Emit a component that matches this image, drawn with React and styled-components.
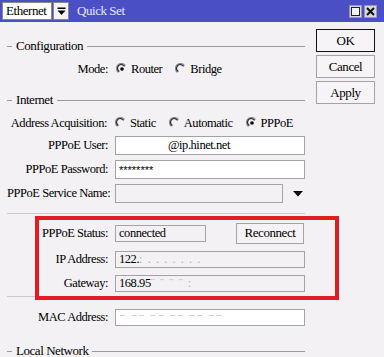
import React from 'react'
import styled, { createGlobalStyle } from 'styled-components'

const GlobalStyle = createGlobalStyle`
  html, body {
    margin: 0;
    padding: 0;
    background: #f3f1f4;
  }
`

const Window = styled.div`
  width: 384px;
  height: 357px;
  overflow: hidden;
  background: #f3f1f4;
  display: flex;
  flex-direction: column;
  font-family: "Liberation Serif", "DejaVu Serif", serif;
  font-size: 12.5px;
  letter-spacing: -0.45px;
  color: #000;
`

const TitleBar = styled.div`
  height: 22px;
  flex: none;
  background: #4b4fc6;
  display: flex;
  align-items: center;
  padding: 0 7px 0 2px;
  box-sizing: border-box;
`

const InterfaceSelect = styled.div`
  width: 50px;
  height: 18px;
  box-sizing: border-box;
  background: #fff;
  border: 1px solid #8a8a8a;
  padding-left: 3px;
  line-height: 16px;
  font-size: 13px;
`

const SelectArrow = styled.div`
  width: 16px;
  height: 18px;
  margin-left: 1px;
  box-sizing: border-box;
  background: #f4f4f4;
  border: 1px solid #8a8a8a;
  display: flex;
  align-items: center;
  justify-content: center;
`

const Title = styled.div`
  margin-left: 8px;
  color: #e4e6ff;
  font-size: 13px;
  flex: 1;
`

const TitleButton = styled.div`
  width: 13px;
  height: 13px;
  margin-left: 2px;
  box-sizing: border-box;
  background: #d8d6dc;
  border: 1px solid #9a98a0;
  display: flex;
  align-items: center;
  justify-content: center;
`

const Body = styled.div`
  display: flex;
  flex: 1;
`

const Form = styled.div`
  width: 305px;
  padding: 16px 0 0 7px;
  box-sizing: border-box;
  display: flex;
  flex-direction: column;
`

const GroupHeader = styled.div`
  height: 16px;
  display: flex;
  align-items: center;
  margin-top: ${p => p.$top || 0}px;
  font-size: 13px;

  &::before {
    content: '';
    width: 5px;
    height: 1px;
    background: #9c9aa0;
    margin-right: 4px;
  }
  &::after {
    content: '';
    flex: 1;
    height: 1px;
    background: #9c9aa0;
    margin-left: 4px;
  }
`

const Row = styled.div`
  display: flex;
  align-items: center;
  height: ${p => p.$h || 19}px;
  margin-top: ${p => p.$top || 0}px;
`

const Label = styled.div`
  width: 101px;
  margin-right: 7px;
  text-align: right;
  white-space: nowrap;
`

const Field = styled.div`
  width: ${p => p.$w || 190}px;
  height: ${p => p.$h || 19}px;
  box-sizing: border-box;
  border: 1px solid #a4a2a8;
  background: ${p => (p.$disabled ? '#f3f1f4' : '#fff')};
  padding-left: ${p => p.$indent || 3}px;
  display: flex;
  align-items: center;
  white-space: nowrap;
  overflow: hidden;
`

const Hidden = styled.span`
  color: #b4b2b8;
  letter-spacing: 1px;
`

const Stars = styled.span`
  font-family: "Liberation Sans", Arial, sans-serif;
  font-size: 11px;
  letter-spacing: 0;
`

const RadioItem = styled.div`
  display: flex;
  align-items: center;
  margin-right: 12px;

  svg {
    margin: 0 3px 0 1px;
  }
`

const ComboArrow = styled.div`
  margin-left: 10px;
  display: flex;
`

const Separator = styled.div`
  height: 1px;
  background: #cac8ce;
  margin-top: ${p => p.$top || 0}px;
`

const StatusBlock = styled.div`
  position: relative;
  padding: 8px 0 4px;
`

const Highlight = styled.div`
  position: absolute;
  left: 28px;
  top: 2px;
  width: 304px;
  height: 84px;
  box-sizing: border-box;
  border: 4px solid #e21c22;
  pointer-events: none;
`

const SmallButton = styled.div`
  width: 68px;
  height: 21px;
  margin-left: 30px;
  box-sizing: border-box;
  border: 1px solid #a4a2a8;
  background: #f5f3f6;
  display: flex;
  align-items: center;
  justify-content: center;
  font-size: 13px;
`

const ButtonColumn = styled.div`
  margin-left: 11px;
  padding-top: 7px;
  display: flex;
  flex-direction: column;
  gap: 3px;
`

const DialogButton = styled.div`
  width: 59px;
  height: 23px;
  box-sizing: border-box;
  border: 1px solid ${p => (p.$primary ? '#111' : '#a4a2a8')};
  background: #f6f4f7;
  display: flex;
  align-items: center;
  justify-content: center;
  font-size: 13px;
`

const Radio = ({ checked, children }) => (
  <RadioItem>
    <svg width="12" height="12" viewBox="0 0 12 12">
      <path d="M9.5 2.5 A5 5 0 1 0 2.5 9.5" fill="none" stroke="#8a888e" strokeWidth="1.2" />
      <path d="M8.6 3.4 A3.8 3.8 0 1 0 3.4 8.6" fill="none" stroke="#2a2a2a" strokeWidth="1.2" />
      {checked && <circle cx="6" cy="6" r="1.8" fill="#000" />}
    </svg>
    {children}
  </RadioItem>
)

const DownTriangle = () => (
  <svg width="10" height="6" viewBox="0 0 10 6">
    <path d="M0 0 H10 L5 5.5 Z" fill="#000" />
  </svg>
)

export default function App() {
  return (
    <>
      <GlobalStyle />
      <Window>
        <TitleBar>
          <InterfaceSelect>Ethernet</InterfaceSelect>
          <SelectArrow>
            <svg width="9" height="9" viewBox="0 0 9 9">
              <rect x="0.5" y="0.5" width="8" height="1.5" fill="#000" />
              <path d="M0.5 3.5 H8.5 L4.5 8 Z" fill="#000" />
            </svg>
          </SelectArrow>
          <Title>Quick Set</Title>
          <TitleButton>
            <svg width="9" height="9" viewBox="0 0 9 9">
              <rect x="0.5" y="0.5" width="8" height="8" fill="#f2f2f2" stroke="#222" />
            </svg>
          </TitleButton>
          <TitleButton>
            <svg width="9" height="9" viewBox="0 0 9 9">
              <path d="M1 1 L8 8 M8 1 L1 8" stroke="#111" strokeWidth="2" />
            </svg>
          </TitleButton>
        </TitleBar>

        <Body>
          <Form>
            <GroupHeader>Configuration</GroupHeader>
            <Row $h={18} $top={6}>
              <Label>Mode:</Label>
              <Radio checked>Router</Radio>
              <Radio>Bridge</Radio>
            </Row>

            <GroupHeader $top={14}>Internet</GroupHeader>
            <Row $h={18} $top={6}>
              <Label>Address Acquisition:</Label>
              <Radio>Static</Radio>
              <Radio>Automatic</Radio>
              <Radio checked>PPPoE</Radio>
            </Row>
            <Row $top={4}>
              <Label>PPPoE User:</Label>
              <Field $indent={52}>@ip.hinet.net</Field>
            </Row>
            <Row $top={5}>
              <Label>PPPoE Password:</Label>
              <Field><Stars>********</Stars></Field>
            </Row>
            <Row $top={5}>
              <Label>PPPoE Service Name:</Label>
              <Field $w={168} $disabled />
              <ComboArrow><DownTriangle /></ComboArrow>
            </Row>

            <Separator $top={10} />
            <StatusBlock>
              <Row $h={22}>
                <Label>PPPoE Status:</Label>
                <Field $w={91} $h={17} $disabled>connected</Field>
                <SmallButton>Reconnect</SmallButton>
              </Row>
              <Row $h={17} $top={7}>
                <Label>IP Address:</Label>
                <Field $h={17} $disabled>122.<Hidden>: . . . . . . .</Hidden></Field>
              </Row>
              <Row $h={17} $top={7}>
                <Label>Gateway:</Label>
                <Field $h={17} $disabled>168.95 <Hidden>¨ ¨ ¨ ¨ :</Hidden></Field>
              </Row>
              <Highlight />
            </StatusBlock>
            <Separator />

            <Row $h={17} $top={12}>
              <Label>MAC Address:</Label>
              <Field $h={17}><Hidden>⁻ ⁻⁻ ⁻⁻ ⁻⁻ ⁻⁻ ⁻⁻</Hidden></Field>
            </Row>

            <GroupHeader $top={17}>Local Network</GroupHeader>
          </Form>

          <ButtonColumn>
            <DialogButton $primary>OK</DialogButton>
            <DialogButton>Cancel</DialogButton>
            <DialogButton>Apply</DialogButton>
          </ButtonColumn>
        </Body>
      </Window>
    </>
  )
}
